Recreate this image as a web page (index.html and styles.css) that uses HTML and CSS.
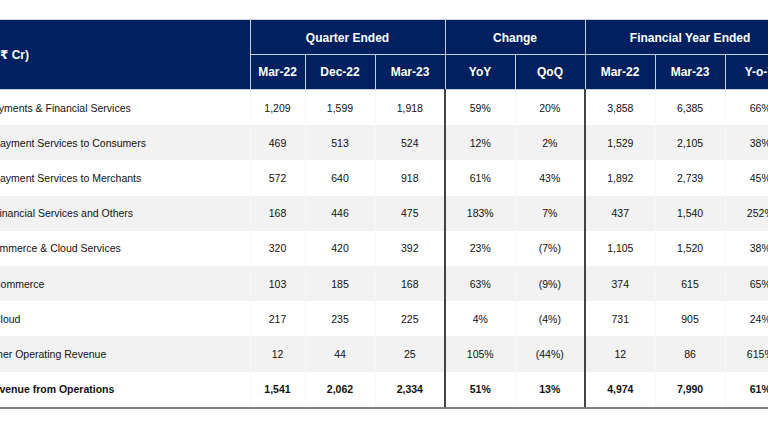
FILE: index.html
```html
<!DOCTYPE html>
<html lang="en">
<head>
<meta charset="utf-8">
<link rel="stylesheet" href="styles.css">
</head>
<body>
<div class="frame">
<table class="fin">
  <colgroup>
    <col class="c-label"><col class="c-narrow"><col class="c-num"><col class="c-num"><col class="c-num"><col class="c-num"><col class="c-num"><col class="c-num"><col class="c-num">
  </colgroup>
  <thead>
    <tr class="h1">
      <th class="label-head" rowspan="2">(₹ Cr)</th>
      <th colspan="3">Quarter Ended</th>
      <th colspan="2">Change</th>
      <th colspan="3">Financial Year Ended</th>
    </tr>
    <tr class="h2">
      <th>Mar-22</th><th>Dec-22</th><th>Mar-23</th>
      <th>YoY</th><th>QoQ</th>
      <th>Mar-22</th><th>Mar-23</th><th>Y-o-Y</th>
    </tr>
  </thead>
  <tbody>
    <tr><td class="lbl">Payments &amp; Financial Services</td><td>1,209</td><td>1,599</td><td>1,918</td><td class="sep">59%</td><td>20%</td><td class="sep">3,858</td><td>6,385</td><td>66%</td></tr>
    <tr class="alt"><td class="lbl sub">Payment Services to Consumers</td><td>469</td><td>513</td><td>524</td><td class="sep">12%</td><td>2%</td><td class="sep">1,529</td><td>2,105</td><td>38%</td></tr>
    <tr><td class="lbl sub">Payment Services to Merchants</td><td>572</td><td>640</td><td>918</td><td class="sep">61%</td><td>43%</td><td class="sep">1,892</td><td>2,739</td><td>45%</td></tr>
    <tr class="alt"><td class="lbl sub">Financial Services and Others</td><td>168</td><td>446</td><td>475</td><td class="sep">183%</td><td>7%</td><td class="sep">437</td><td>1,540</td><td>252%</td></tr>
    <tr><td class="lbl">Commerce &amp; Cloud Services</td><td>320</td><td>420</td><td>392</td><td class="sep">23%</td><td>(7%)</td><td class="sep">1,105</td><td>1,520</td><td>38%</td></tr>
    <tr class="alt"><td class="lbl sub">Commerce</td><td>103</td><td>185</td><td>168</td><td class="sep">63%</td><td>(9%)</td><td class="sep">374</td><td>615</td><td>65%</td></tr>
    <tr><td class="lbl sub">Cloud</td><td>217</td><td>235</td><td>225</td><td class="sep">4%</td><td>(4%)</td><td class="sep">731</td><td>905</td><td>24%</td></tr>
    <tr class="alt"><td class="lbl">Other Operating Revenue</td><td>12</td><td>44</td><td>25</td><td class="sep">105%</td><td>(44%)</td><td class="sep">12</td><td>86</td><td>615%</td></tr>
    <tr class="total"><td class="lbl">Revenue from Operations</td><td>1,541</td><td>2,062</td><td>2,334</td><td class="sep">51%</td><td>13%</td><td class="sep">4,974</td><td>7,990</td><td>61%</td></tr>
  </tbody>
</table>
</div>
</body>
</html>
```
FILE: styles.css
```css
html, body {
  margin: 0;
  padding: 0;
  background: #ffffff;
  overflow: hidden;
  width: 768px;
  height: 423px;
}

.frame {
  padding-top: 19px;
  margin-left: -22px;
  width: 830px;
}

.fin {
  border-collapse: collapse;
  table-layout: fixed;
  width: 816px;
  font-family: "Liberation Sans", Arial, "DejaVu Sans", sans-serif;
  color: #111111;
}

.c-label { width: 272px; }
.c-narrow { width: 55px; }
.c-num { width: 70px; }

.fin thead th {
  background: #002060;
  color: #ffffff;
  font-size: 12px;
  font-weight: bold;
  text-align: center;
  height: 34px;
  padding: 0;
  border: 1px solid #c6cddc;
  white-space: nowrap;
}

.fin thead tr.h1 th {
  border-top: 1px solid #d6d6d6;
  height: 32px;
  padding-top: 2px;
}

.fin thead tr.h1 th.label-head {
  text-align: left;
  padding-left: 18px;
  padding-top: 0;
  height: auto;
  border-left: none;
}

.fin tbody td {
  font-size: 10.5px;
  text-align: center;
  height: 35.2px;
  padding: 0;
  border-left: 1px solid #f7f7f7;
  white-space: nowrap;
}

.fin tbody tr.alt td {
  background: #f2f2f2;
}

.fin tbody td.lbl {
  text-align: left;
  padding-left: 8px;
  border-left: none;
}

.fin tbody td.sub {
  padding-left: 15px;
}

.fin tbody td.sep {
  border-left: 2px solid #444444;
}

.fin tbody tr.total td {
  font-weight: bold;
  border-bottom: 2px solid #808080;
}
```
